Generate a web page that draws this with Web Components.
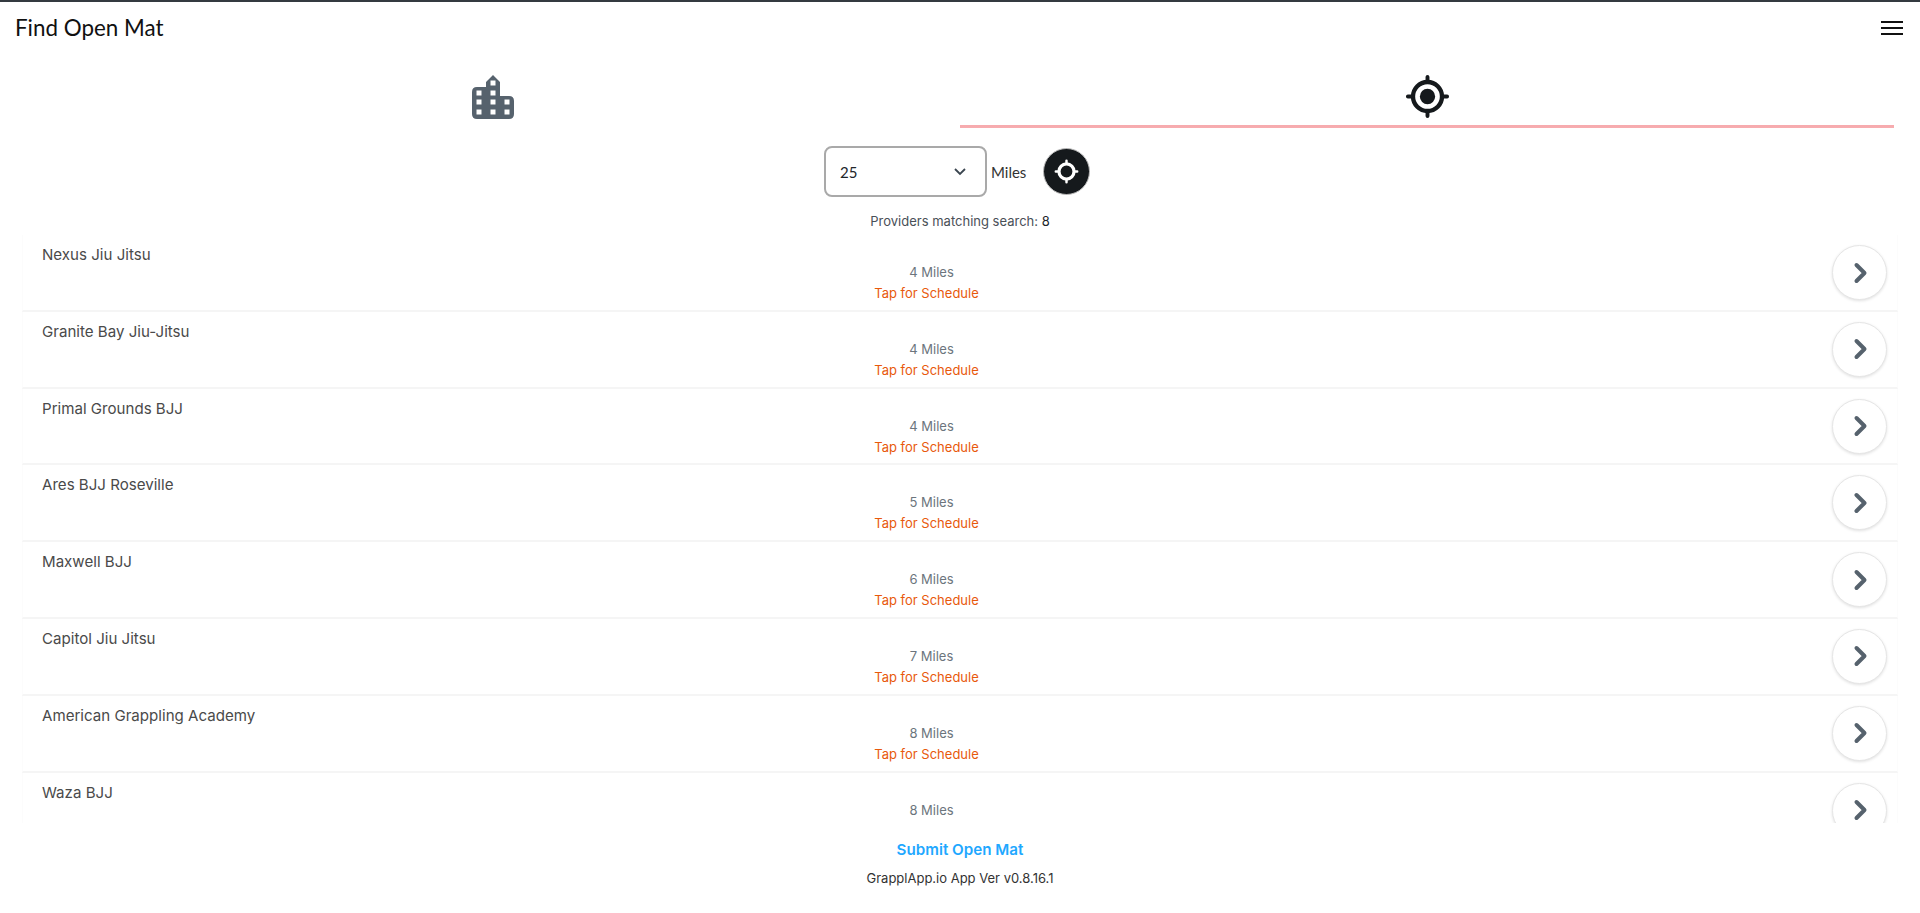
<!DOCTYPE html>
<html>
<head>
<meta charset="utf-8">
<title>Find Open Mat</title>
<style>
  html, body { margin: 0; height: 100%; background: #fff; }
  body { font-family: Inter, "Noto Sans", sans-serif; overflow: hidden; }
</style>
</head>
<body>
<find-open-mat></find-open-mat>

<script>
const ICONS = {
    city: `<svg viewBox="0 0 42 44" width="42" height="44"><path fill="#56626d" fill-rule="evenodd" d="M5 12H14V7L21 0 28 7V21H37Q42 21 42 26V39Q42 44 37 44H5Q0 44 0 39V17Q0 12 5 12Z M18.500 5.500h5v5h-5z M4.500 15.500h5v5h-5z M18.500 15.500h5v5h-5z M4.500 24.500h5v5h-5z M18.500 24.500h5v5h-5z M32.500 24.500h5v5h-5z M4.500 34.500h5v5h-5z M18.500 34.500h5v5h-5z M32.500 34.500h5v5h-5z"/></svg>`,
    target: `<svg viewBox="0 0 24 24" width="100%" height="100%" fill="none" stroke="currentColor"><circle cx="12" cy="12" r="7.400" stroke-width="2.200"/><circle cx="12" cy="12" r="3.900" fill="currentColor" stroke="none"/><path d="M12 2v2.500M12 19.500V22M2 12h2.500M19.500 12H22" stroke-width="2" stroke-linecap="round"/></svg>`,
    ring: `<svg viewBox="0 0 24 24" width="100%" height="100%" fill="none" stroke="currentColor"><circle cx="12" cy="12" r="6.700" stroke-width="2.900"/><path d="M12 2.500v1.500M12 20v1.500M2.500 12H4M20 12h1.500" stroke-width="2.200" stroke-linecap="round"/></svg>`
};

const PROVIDERS = [
    ['Nexus Jiu Jitsu', 4],
    ['Granite Bay Jiu-Jitsu', 4],
    ['Primal Grounds BJJ', 4],
    ['Ares BJJ Roseville', 5],
    ['Maxwell BJJ', 6],
    ['Capitol Jiu Jitsu', 7],
    ['American Grappling Academy', 8],
    ['Waza BJJ', 8]
];

class AppHeader extends HTMLElement {
    constructor() {
        super();
        this.attachShadow({ mode: 'open' });
        this.shadowRoot.innerHTML = `<style>
        :host {
          display: flex;
          align-items: center;
          justify-content: space-between;
          height: 52px;
          padding: 0 17px 0 15px;
          border-top: 2px solid #343a40;
          color: #111;
        }
        h1 { margin: 0; font: 400 22.400px/1 Lato, sans-serif; }
        .menu { width: 22px; display: grid; gap: 4px; }
        .menu i { display: block; height: 2px; background: #111; }
      </style>
      <h1><slot></slot></h1>
      <div class="menu"><i></i><i></i><i></i></div>`;
    }
}

class SearchTabs extends HTMLElement {
    constructor() {
        super();
        this.attachShadow({ mode: 'open' });
        this.shadowRoot.innerHTML = `<style>
        :host {
          display: grid;
          grid-template-columns: 1fr 1fr;
          height: 74px;
          margin: 0 26px;
        }
        div { display: flex; align-items: flex-start; justify-content: center; padding-top: 21px; box-sizing: border-box; }
        .near { color: #15191c; border-bottom: 3px solid; border-image: linear-gradient(#f7adb0, #e9525c, #f7adb0) 1; }
        .near span { width: 47px; height: 47px; margin-top: -2px; }
      </style>
      <div class="city">${ICONS.city}</div>
      <div class="near"><span>${ICONS.target}</span></div>`;
    }
}

class RadiusForm extends HTMLElement {
    constructor() {
        super();
        this.attachShadow({ mode: 'open' });
        this.shadowRoot.innerHTML = `<style>
        :host {
          display: flex;
          align-items: center;
          justify-content: center;
          height: 51px;
          margin: 18px 6px 0 0;
          font: 15px Lato, sans-serif;
          color: #212529;
        }
        .select {
          box-sizing: border-box;
          width: 163px;
          height: 51px;
          border: 2px solid #a9a9a9;
          border-radius: 8px;
          padding: 0 18px 0 14px;
          display: flex;
          align-items: center;
          justify-content: space-between;
        }
        .miles { margin-left: 4px; width: 52px; color: #333; }
        button {
          box-sizing: border-box;
          width: 47px;
          height: 47px;
          padding: 9px;
          border: 1px solid #bbb;
          border-radius: 50%;
          background: #15191c;
          color: #fff;
        }
      </style>
      <div class="select"><span>25</span>
        <svg width="14" height="9" viewBox="0 0 14 9"><path d="M2 2l5 5 5-5" fill="none" stroke="#3b4650" stroke-width="1.800"/></svg>
      </div>
      <span class="miles">Miles</span>
      <button>${ICONS.ring}</button>`;
    }
}

class ProviderRow extends HTMLElement {
    constructor() {
        super();
        this.attachShadow({ mode: 'open' });
        this.shadowRoot.innerHTML = `<style>
        :host {
          display: grid;
          grid-template-columns: 1fr auto;
          box-sizing: border-box;
          height: 76.800px;
          padding: 0 10px 0 19px;
          border: solid #fcfcfc;
          border-width: 0 1px;
          border-bottom: 2px solid #f5f5f5;
        }
        .name { grid-row: 1; grid-column: 1; padding-top: 10px; font-size: 15.100px; line-height: 20px; color: #4a4a4a; }
        .info { grid-row: 1; grid-column: 1; text-align: center; padding: 27px 21px 0 0; font-size: 13px; line-height: 21px; }
        .dist { color: #6c757d; padding-left: 10px; }
        .tap { color: #e8590c; }
        .go {
          grid-row: 1;
          grid-column: 2;
          align-self: start;
          margin-top: 10px;
          box-sizing: border-box;
          width: 55px;
          height: 55px;
          border-radius: 50%;
          border: 1px solid #e6e6e6;
          box-shadow: 0 1px 3px rgba(0,0,0,.12);
          background: #fff;
          display: flex;
          align-items: center;
          justify-content: center;
        }
      </style>
      <div class="name"><slot name="name"></slot></div>
      <div class="info">
        <div class="dist"><slot name="dist"></slot></div>
        <div class="tap">Tap for Schedule</div>
      </div>
      <div class="go"><svg width="18" height="26" viewBox="0 0 18 26"><path d="M5.500 5l8 8-8 8" fill="none" stroke="#56626d" stroke-width="4" stroke-linecap="round" stroke-linejoin="round"/></svg></div>`;
    }
}

class FindOpenMat extends HTMLElement {
    constructor() {
        super();
        this.attachShadow({ mode: 'open' });
        const rows = PROVIDERS.map(([name, miles]) => `<provider-row>
            <span slot="name">${name}</span><span slot="dist">${miles} Miles</span>
        </provider-row>`).join('');
        this.shadowRoot.innerHTML = `<style>
        :host { display: flex; flex-direction: column; height: 913px; }
        .count { text-align: center; margin-top: 15px; font-size: 13px; line-height: 18px; color: #495057; }
        .list { margin: 5px 22px 0 22px; height: 588px; overflow: hidden; }
        .submit { text-align: center; margin-top: 16px; font-size: 15.200px; font-weight: 600; line-height: 22px; color: #1fa8ff; }
        .ver { text-align: center; margin-top: 7px; font-size: 13px; line-height: 20px; color: #333; }
      </style>
      <app-header>Find Open Mat</app-header>
      <search-tabs></search-tabs>
      <radius-form></radius-form>
      <div class="count">Providers matching search: <span style="color:#212529">8</span></div>
      <div class="list">${rows}</div>
      <div class="submit">Submit Open Mat</div>
      <div class="ver">GrapplApp.io App Ver v0.8.16.1</div>`;
    }
}

customElements.define('app-header', AppHeader);
customElements.define('search-tabs', SearchTabs);
customElements.define('radius-form', RadiusForm);
customElements.define('provider-row', ProviderRow);
customElements.define('find-open-mat', FindOpenMat);
</script>
</body>
</html>
